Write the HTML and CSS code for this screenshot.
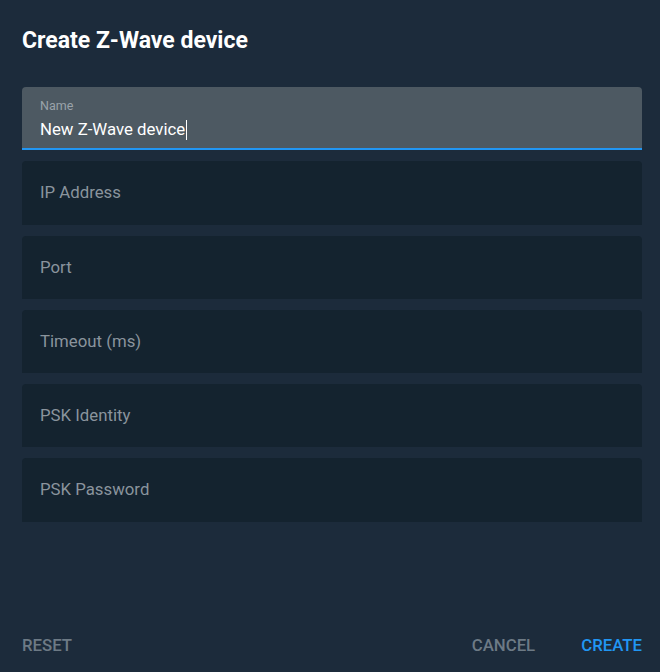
FILE: index.html
```html
<!DOCTYPE html>
<html>
<head>
<meta charset="utf-8">
<link rel="stylesheet" href="styles.css">
</head>
<body>
<div class="dialog">
  <h2 class="title">Create Z-Wave device</h2>
  <div class="fields">
    <div class="field active">
      <span class="label-small">Name</span>
      <span class="value">New Z-Wave device<span class="caret"></span></span>
    </div>
    <div class="field"><span class="placeholder">IP Address</span></div>
    <div class="field"><span class="placeholder">Port</span></div>
    <div class="field"><span class="placeholder">Timeout (ms)</span></div>
    <div class="field"><span class="placeholder">PSK Identity</span></div>
    <div class="field"><span class="placeholder">PSK Password</span></div>
  </div>
  <div class="actions">
    <span class="btn muted">RESET</span>
    <span class="spacer"></span>
    <span class="btn muted">CANCEL</span>
    <span class="btn primary">CREATE</span>
  </div>
</div>
</body>
</html>
```

FILE: styles.css
```css
html, body {
  margin: 0;
  padding: 0;
  height: 100%;
  background: #1c2b3b;
  font-family: Roboto, "Liberation Sans", sans-serif;
}
.dialog {
  box-sizing: border-box;
  height: 672px;
  padding: 0 18px 0 22px;
  display: flex;
  flex-direction: column;
}
.title {
  margin: 26px 0 0 0;
  font-size: 23px;
  line-height: 30px;
  font-weight: 700;
  color: #ffffff;
}
.fields {
  margin-top: 31px;
  display: flex;
  flex-direction: column;
  gap: 11px;
}
.field {
  box-sizing: border-box;
  height: 63.25px;
  background: #14232f;
  border-radius: 4px 4px 0 0;
  padding: 0 18px;
  display: flex;
  flex-direction: column;
  justify-content: center;
}
.field.active {
  background: #4d5962;
  border-bottom: 2px solid #2196f3;
  justify-content: flex-start;
  padding-top: 12px;
}
.label-small {
  font-size: 12.5px;
  line-height: 14px;
  color: #9aa3aa;
}
.value {
  margin-top: 6px;
  font-size: 16.8px;
  line-height: 21px;
  color: #ffffff;
  display: flex;
  align-items: center;
}
.caret {
  display: inline-block;
  width: 1px;
  height: 20px;
  background: #ffffff;
  margin-left: 1px;
}
.placeholder {
  font-size: 16.8px;
  line-height: 21px;
  color: #8a949d;
}
.actions {
  margin-top: auto;
  margin-bottom: 16px;
  display: flex;
  align-items: center;
  gap: 46px;
}
.spacer { flex: 1; }
.btn {
  font-size: 16.8px;
  line-height: 21px;
  font-weight: 500;
}
.btn.muted { color: #6d7a85; }
.btn.primary { color: #2196f3; }
.btn.muted + .btn.primary { margin-left: 0; }
```
